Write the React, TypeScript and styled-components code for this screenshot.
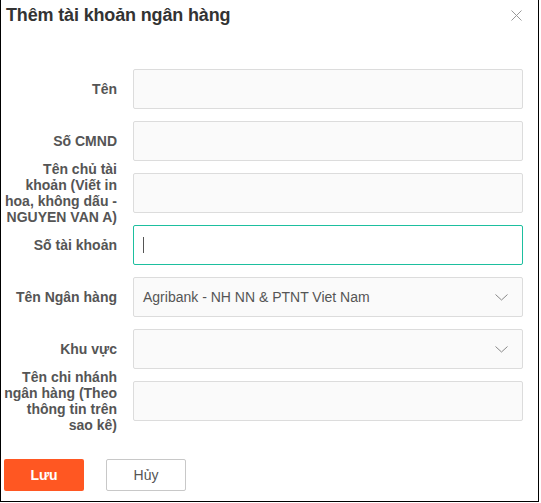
import React from "react";
import styled, { createGlobalStyle } from "styled-components";

const Global = createGlobalStyle`
  html, body { margin: 0; padding: 0; background: #fff; }
  body { font-family: "Liberation Sans", Arial, sans-serif; }
  * { box-sizing: border-box; }
`;

const Frame = styled.div`
  width: 539px;
  height: 502px;
  border: 1px solid #000;
  border-top: none;
  background: #fff;
  display: flex;
  flex-direction: column;
`;

const Header = styled.div`
  height: 30px;
  display: flex;
  justify-content: space-between;
  align-items: flex-start;
  padding: 0 16px 0 5px;
`;

const Title = styled.h2`
  margin: 3px 0 0;
  font-size: 18px;
  line-height: 24px;
  font-weight: bold;
  color: #333;
  letter-spacing: -0.15px;
`;

const Close = styled.button`
  margin-top: 10px;
  padding: 0;
  border: none;
  background: none;
  width: 11px;
  height: 11px;
  display: flex;
  cursor: pointer;
`;

const Form = styled.div`
  padding-top: 39px;
  display: flex;
  flex-direction: column;
  gap: 12px;
`;

const Row = styled.div`
  height: 40px;
  display: flex;
  align-items: center;
  gap: 16px;
  padding-right: 15px;
`;

const Label = styled.div`
  width: 116px;
  flex: none;
  text-align: right;
  font-size: 14px;
  line-height: 16px;
  font-weight: bold;
  color: #555;
  white-space: nowrap;
`;

const Line = styled.span`
  display: block;
`;

const Field = styled.div<{ $focused?: boolean }>`
  flex: 1;
  height: 40px;
  display: flex;
  align-items: center;
  padding: 0 14px 0 9px;
  border: 1px solid ${(p) => (p.$focused ? "#1dbf9f" : "#dcdcdc")};
  border-radius: 2px;
  background: ${(p) => (p.$focused ? "#fff" : "#fafafa")};
  font-size: 14px;
  color: #555;
`;

const Caret = styled.span`
  width: 1px;
  height: 16px;
  background: #555;
`;

const Value = styled.span`
  flex: 1;
`;

const Footer = styled.div`
  margin-top: 38px;
  padding-left: 3px;
  display: flex;
  gap: 22px;
`;

const Button = styled.button<{ $primary?: boolean }>`
  width: 80px;
  height: 32px;
  border-radius: 2px;
  font-family: "Liberation Sans", Arial, sans-serif;
  font-size: 14px;
  cursor: pointer;
  border: ${(p) => (p.$primary ? "none" : "1px solid #c8c8c8")};
  background: ${(p) => (p.$primary ? "#ff5722" : "#fff")};
  color: ${(p) => (p.$primary ? "#fff" : "#555")};
  font-weight: ${(p) => (p.$primary ? "bold" : "normal")};
`;

const Chevron = () => (
  <svg width="13" height="7" viewBox="0 0 13 7" style={{ marginLeft: "auto" }}>
    <polyline points="0.5,0.5 6.5,6 12.5,0.5" fill="none" stroke="#888" strokeWidth="1" />
  </svg>
);

type FieldDef = {
  label: string[];
  kind: "input" | "focused" | "select";
  value?: string;
};

const fields: FieldDef[] = [
  { label: ["Tên"], kind: "input" },
  { label: ["Số CMND"], kind: "input" },
  {
    label: ["Tên chủ tài", "khoản (Viết in", "hoa, không dấu -", "NGUYEN VAN A)"],
    kind: "input",
  },
  { label: ["Số tài khoản"], kind: "focused" },
  { label: ["Tên Ngân hàng"], kind: "select", value: "Agribank - NH NN & PTNT Viet Nam" },
  { label: ["Khu vực"], kind: "select", value: "" },
  { label: ["Tên chi nhánh", "ngân hàng (Theo", "thông tin trên", "sao kê)"], kind: "input" },
];

export default function App() {
  return (
    <>
      <Global />
      <Frame>
        <Header>
          <Title>Thêm tài khoản ngân hàng</Title>
          <Close aria-label="close">
            <svg width="11" height="11" viewBox="0 0 11 11">
              <path d="M0.5 0.5 L10.5 10.5 M10.5 0.5 L0.5 10.5" stroke="#999" strokeWidth="1" />
            </svg>
          </Close>
        </Header>
        <Form>
          {fields.map((f, i) => (
            <Row key={i}>
              <Label>
                {f.label.map((l, j) => (
                  <Line key={j}>{l}</Line>
                ))}
              </Label>
              <Field $focused={f.kind === "focused"}>
                {f.kind === "focused" && <Caret />}
                {f.kind === "select" && <Value>{f.value}</Value>}
                {f.kind === "select" && <Chevron />}
              </Field>
            </Row>
          ))}
        </Form>
        <Footer>
          <Button $primary>Lưu</Button>
          <Button>Hủy</Button>
        </Footer>
      </Frame>
    </>
  );
}
